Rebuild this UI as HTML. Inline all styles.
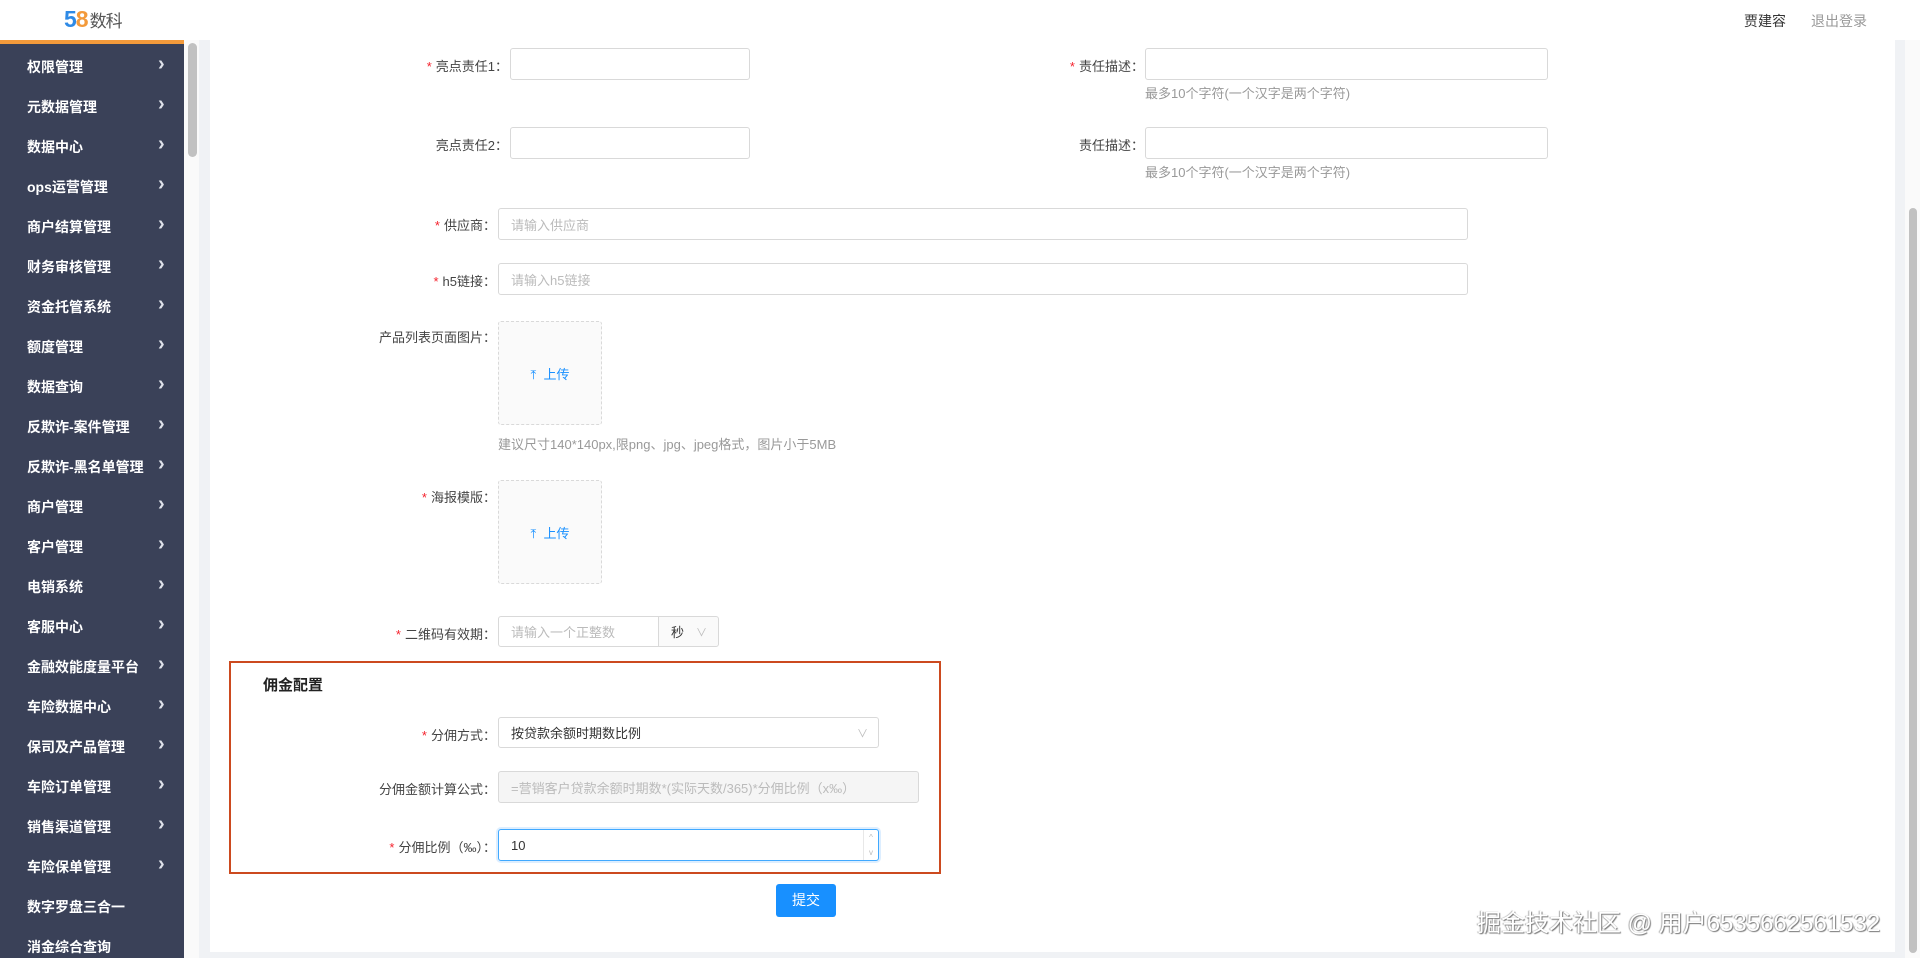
<!DOCTYPE html>
<html><head><meta charset="utf-8">
<style>
*{margin:0;padding:0;box-sizing:border-box}
body{width:1920px;height:958px;overflow:hidden;background:#f0f2f5;font-family:"Liberation Sans","Noto Sans CJK SC",sans-serif;font-size:14px;color:#333;position:relative}
.a{position:absolute}
.hdr{left:0;top:0;width:1920px;height:40px;background:#fff}
.side{left:0;top:40px;width:184px;height:918px;background:#3a4158;border-top:4px solid #f39a3b}
.mi{position:absolute;left:27px;color:#fff;font-weight:bold;font-size:14px;width:150px}
.mi span{position:absolute;left:131px;top:-4px;font-weight:bold;color:#dfe2ea;font-size:20px}
.card{left:210px;top:40px;width:1685px;height:912px;background:#fff}
.lbl{position:absolute;text-align:right;font-size:13px;color:#444;white-space:nowrap}
.lbl b{color:#f5222d;font-weight:normal;margin-right:4px}
.inp{position:absolute;border:1px solid #d9d9d9;border-radius:3px;background:#fff;font-size:13px;color:#bbb;padding-left:12px;display:flex;align-items:center}
.hint{position:absolute;font-size:13px;color:#999;white-space:nowrap}
.up{position:absolute;width:104px;height:104px;border:1px dashed #d9d9d9;background:#fafafa;border-radius:3px;color:#1890ff;font-size:13px;display:flex;align-items:center;justify-content:center}
</style></head><body>
<div class="a hdr">
 <div class="a" style="left:64px;top:6px;font-size:23px;font-weight:bold;letter-spacing:-1px"><span style="color:#2e8ae6">5</span><span style="color:#f39a3b">8</span><span style="color:#555;font-size:17px;font-weight:normal;margin-left:2px">数科</span></div>
 <div class="a" style="left:1744px;top:11px;font-size:14px;color:#333">贾建容</div>
 <div class="a" style="left:1811px;top:11px;font-size:14px;color:#999">退出登录</div>
</div>
<div class="a side">
<div class="mi" style="top:13px">权限管理<span>›</span></div>
<div class="mi" style="top:53px">元数据管理<span>›</span></div>
<div class="mi" style="top:93px">数据中心<span>›</span></div>
<div class="mi" style="top:133px">ops运营管理<span>›</span></div>
<div class="mi" style="top:173px">商户结算管理<span>›</span></div>
<div class="mi" style="top:213px">财务审核管理<span>›</span></div>
<div class="mi" style="top:253px">资金托管系统<span>›</span></div>
<div class="mi" style="top:293px">额度管理<span>›</span></div>
<div class="mi" style="top:333px">数据查询<span>›</span></div>
<div class="mi" style="top:373px">反欺诈-案件管理<span>›</span></div>
<div class="mi" style="top:413px">反欺诈-黑名单管理<span>›</span></div>
<div class="mi" style="top:453px">商户管理<span>›</span></div>
<div class="mi" style="top:493px">客户管理<span>›</span></div>
<div class="mi" style="top:533px">电销系统<span>›</span></div>
<div class="mi" style="top:573px">客服中心<span>›</span></div>
<div class="mi" style="top:613px">金融效能度量平台<span>›</span></div>
<div class="mi" style="top:653px">车险数据中心<span>›</span></div>
<div class="mi" style="top:693px">保司及产品管理<span>›</span></div>
<div class="mi" style="top:733px">车险订单管理<span>›</span></div>
<div class="mi" style="top:773px">销售渠道管理<span>›</span></div>
<div class="mi" style="top:813px">车险保单管理<span>›</span></div>
<div class="mi" style="top:853px">数字罗盘三合一</div>
<div class="mi" style="top:893px">消金综合查询</div>
</div>
<div class="a" style="left:184px;top:40px;width:15px;height:918px;background:#fafafa"></div>
<div class="a" style="left:188px;top:43px;width:9px;height:114px;background:#c1c1c1;border-radius:5px"></div>
<div class="a card"></div>
<div class="a" style="left:1905px;top:40px;width:15px;height:918px;background:#fafafa"></div>
<div class="a" style="left:1909px;top:208px;width:8px;height:745px;background:#c1c1c1;border-radius:4px"></div>

<div class="lbl" style="right:1412px;top:56px"><b>*</b>亮点责任1：</div>
<div class="inp" style="left:510px;top:48px;width:240px;height:32px"></div>
<div class="lbl" style="right:776px;top:56px"><b>*</b>责任描述：</div>
<div class="inp" style="left:1145px;top:48px;width:403px;height:32px"></div>
<div class="hint" style="left:1145px;top:83px">最多10个字符(一个汉字是两个字符)</div>

<div class="lbl" style="right:1412px;top:135px">亮点责任2：</div>
<div class="inp" style="left:510px;top:127px;width:240px;height:32px"></div>
<div class="lbl" style="right:776px;top:135px">责任描述：</div>
<div class="inp" style="left:1145px;top:127px;width:403px;height:32px"></div>
<div class="hint" style="left:1145px;top:162px">最多10个字符(一个汉字是两个字符)</div>

<div class="lbl" style="right:1424px;top:215px"><b>*</b>供应商：</div>
<div class="inp" style="left:498px;top:208px;width:970px;height:32px">请输入供应商</div>
<div class="lbl" style="right:1424px;top:271px"><b>*</b>h5链接：</div>
<div class="inp" style="left:498px;top:263px;width:970px;height:32px">请输入h5链接</div>

<div class="lbl" style="right:1424px;top:327px">产品列表页面图片：</div>
<div class="up" style="left:498px;top:321px">⤒&nbsp; 上传</div>
<div class="hint" style="left:498px;top:434px">建议尺寸140*140px,限png、jpg、jpeg格式，图片小于5MB</div>
<div class="lbl" style="right:1424px;top:487px"><b>*</b>海报模版：</div>
<div class="up" style="left:498px;top:480px">⤒&nbsp; 上传</div>

<div class="lbl" style="right:1424px;top:624px"><b>*</b>二维码有效期：</div>
<div class="inp" style="left:498px;top:616px;width:161px;height:31px;border-radius:3px 0 0 3px">请输入一个正整数</div>
<div class="inp" style="left:658px;top:616px;width:61px;height:31px;background:#fafafa;color:#333;border-radius:0 3px 3px 0">秒 <span style="color:#bbb;margin-left:12px;font-size:11px">∨</span></div>

<div class="a" style="left:229px;top:661px;width:712px;height:213px;border:2px solid #cc4a1f"></div>
<div class="a" style="left:263px;top:674px;font-size:15px;font-weight:bold;color:#222">佣金配置</div>
<div class="lbl" style="right:1424px;top:725px"><b>*</b>分佣方式：</div>
<div class="inp" style="left:498px;top:717px;width:381px;height:31px;color:#333">按贷款余额时期数比例<span style="position:absolute;right:10px;color:#bbb;font-size:11px">∨</span></div>
<div class="lbl" style="right:1424px;top:779px">分佣金额计算公式：</div>
<div class="inp" style="left:498px;top:771px;width:421px;height:32px;background:#f5f5f5">=营销客户贷款余额时期数*(实际天数/365)*分佣比例（x‰）</div>
<div class="lbl" style="right:1424px;top:837px"><b>*</b>分佣比例（‰）：</div>
<div class="inp" style="left:498px;top:829px;width:381px;height:32px;color:#333;border-color:#40a9ff;box-shadow:0 0 0 2px rgba(24,144,255,.15)">10<span style="position:absolute;right:0;top:0;width:15px;height:30px;border-left:1px solid #e8e8e8;font-size:8px;color:#bbb;text-align:center;line-height:15px">^<br>v</span></div>

<div class="a" style="left:776px;top:884px;width:60px;height:33px;background:#1890ff;border-radius:3px;color:#fff;font-size:14px;text-align:center;line-height:33px">提交</div>

<div class="a" style="left:1477px;top:903px;font-size:24px;color:#fff;text-shadow:1px 1px 1px #777,-1px 0 1px #aaa;white-space:nowrap">掘金技术社区 @ 用户6535662561532</div>
</body></html>
